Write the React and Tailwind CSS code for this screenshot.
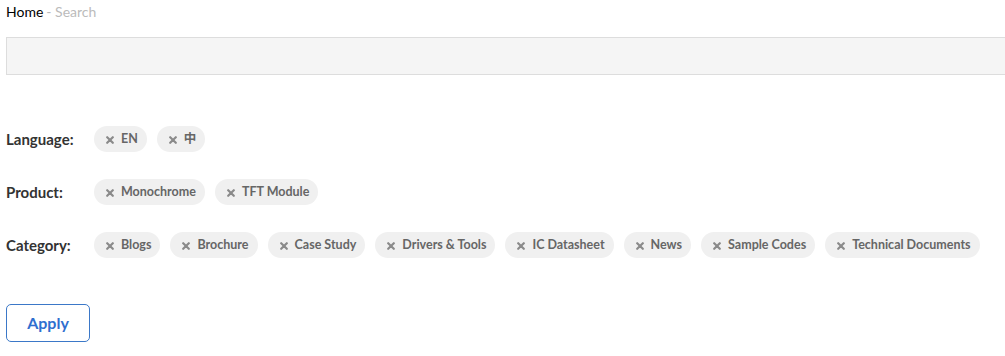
import React from 'react';

const filters = [
  { label: 'Language:', items: ['EN', '中'] },
  { label: 'Product:', items: ['Monochrome', 'TFT Module'] },
  {
    label: 'Category:',
    items: ['Blogs', 'Brochure', 'Case Study', 'Drivers & Tools', 'IC Datasheet', 'News', 'Sample Codes', 'Technical Documents'],
  },
];

function Chip({ text }) {
  return (
    <span className="flex shrink-0 items-center whitespace-nowrap h-[26px] pl-3 pr-[9px] rounded-full bg-[#f0f0f0] text-[12.5px] font-bold text-[#666]">
      <svg width="8" height="8" viewBox="0 0 8 8" className="mr-[7px] mt-[1px] shrink-0">
        <path d="M1.2 1.2L6.8 6.8M6.8 1.2L1.2 6.8" stroke="#8a8a8a" strokeWidth="2.2" strokeLinecap="round" />
      </svg>
      {text}
    </span>
  );
}

export default function App() {
  return (
    <div className="w-[1005px] h-[356px] overflow-hidden bg-white pl-[6px] font-['Lato','Noto_Sans_CJK_SC',sans-serif]">
      <div className="h-[22px] flex items-center text-[14px]">
        <span className="text-black">Home</span>
        <span className="text-[#bbb] ml-[3px]">- Search</span>
      </div>
      <div className="mt-[15px] h-[38px] w-[1010px] bg-[#f5f5f5] border border-[#ddd]" />
      <div className="mt-[51px] flex flex-col gap-[27px]">
        {filters.map((f) => (
          <div key={f.label} className="flex items-center">
            <div className="w-[88px] shrink-0 text-[15px] font-bold text-[#333]">{f.label}</div>
            <div className="flex gap-[10px]">
              {f.items.map((t) => (
                <Chip key={t} text={t} />
              ))}
            </div>
          </div>
        ))}
      </div>
      <button className="mt-[46px] w-[84px] h-[38px] rounded-[5px] border border-[#3b78c8] text-[#2f6fcf] text-[16px] font-bold">
        Apply
      </button>
    </div>
  );
}
